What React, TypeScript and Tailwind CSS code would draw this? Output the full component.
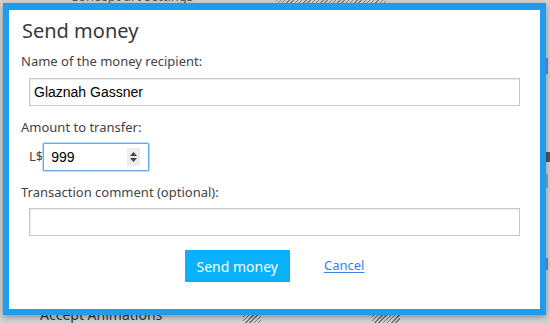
import React from "react";

const ui = { fontFamily: '"Noto Sans", "Open Sans", sans-serif' };
const arial = { fontFamily: '"Liberation Sans", Arial, sans-serif' };

export default function App() {
  return (
    <div className="relative w-[550px] h-[323px] overflow-hidden bg-[#d3d3d3]" style={ui}>
      {/* background page fragments */}
      <div className="absolute left-[70px] top-[-13px] text-[13px] text-[#555]">Concept art settings</div>
      <div className="absolute left-[276px] top-0 w-[110px] h-[3px] bg-[repeating-linear-gradient(135deg,#888_0_1px,#d3d3d3_1px_3px)]" />
      <div className="absolute left-[40px] top-[304px] text-[14px] text-[#333]">Accept Animations</div>
      <div className="absolute left-[243px] top-[312px] w-[18px] h-[12px] bg-[repeating-linear-gradient(135deg,#777_0_1px,#d3d3d3_1px_3px)]" />
      <div className="absolute left-[372px] top-[312px] w-[28px] h-[12px] bg-[repeating-linear-gradient(135deg,#777_0_1px,#d3d3d3_1px_3px)]" />
      <div className="absolute left-[546px] top-[58px] w-[4px] h-[16px] border-l-2 border-[#3b6fd0] opacity-70" />
      <div className="absolute left-[546px] top-[152px] w-[4px] h-[10px] bg-[#333] opacity-80" />
      <div className="absolute left-[546px] top-[174px] w-[4px] h-[14px] border-l-2 border-[#6a8fd6] opacity-70" />
      <div className="absolute left-[546px] top-[258px] w-[4px] h-[12px] border-l-2 border-[#3b6fd0] opacity-70" />

      {/* dialog */}
      <div className="absolute left-[3px] top-[3px] w-[543px] h-[312px] bg-white border-[6px] border-t-[7px] border-[#1e9cee] shadow-[0_2px_6px_rgba(0,0,0,0.35)] flex flex-col pt-[7px] pl-[12px] pr-[20px]">
        <h1 className="ml-[1px] text-[20px] leading-[28px] text-[#383838]">Send money</h1>

        <label className="mt-[7px] text-[13px] leading-[18px] text-[#444]">Name of the money recipient:</label>
        <div className="mt-[8px] ml-[8px] h-[28px] border border-[#c9c9c9] shadow-[inset_1px_1px_0_#ececec] flex items-center px-[4px] text-[14px] text-black" style={arial}>
          Glaznah Gassner
        </div>

        <label className="mt-[12px] text-[13px] leading-[18px] text-[#444]">Amount to transfer:</label>
        <div className="mt-[7px] ml-[8px] flex items-center">
          <span className="text-[13px] text-[#444]">L$</span>
          <div className="w-[106px] h-[28px] border border-[#62aee9] shadow-[0_0_0_1px_#b9dcf6] rounded-[1px] flex items-center pl-[7px] pr-[8px] text-[14px] text-black" style={arial}>
            <span className="flex-1">999</span>
            <span className="w-[13px] h-[18px] bg-[#ececec] flex flex-col items-center justify-center gap-[2px]">
              <svg width="7" height="4" viewBox="0 0 7 4"><path d="M0 4 L3.5 0 L7 4Z" fill="#444" /></svg>
              <svg width="7" height="4" viewBox="0 0 7 4"><path d="M0 0 L3.5 4 L7 0Z" fill="#444" /></svg>
            </span>
          </div>
        </div>

        <label className="mt-[12px] text-[13px] leading-[18px] text-[#444]">Transaction comment (optional):</label>
        <div className="mt-[7px] ml-[8px] h-[28px] border border-[#c9c9c9] shadow-[inset_1px_1px_0_#ececec]" />

        <div className="mt-[14px] flex items-center justify-center gap-[34px] pl-[8px]">
          <button className="h-[32px] px-[12px] bg-[#0ab1f9] text-white text-[14px]">Send money</button>
          <a className="text-[13px] text-[#3c7fe6] underline underline-offset-2">Cancel</a>
        </div>
      </div>
    </div>
  );
}
